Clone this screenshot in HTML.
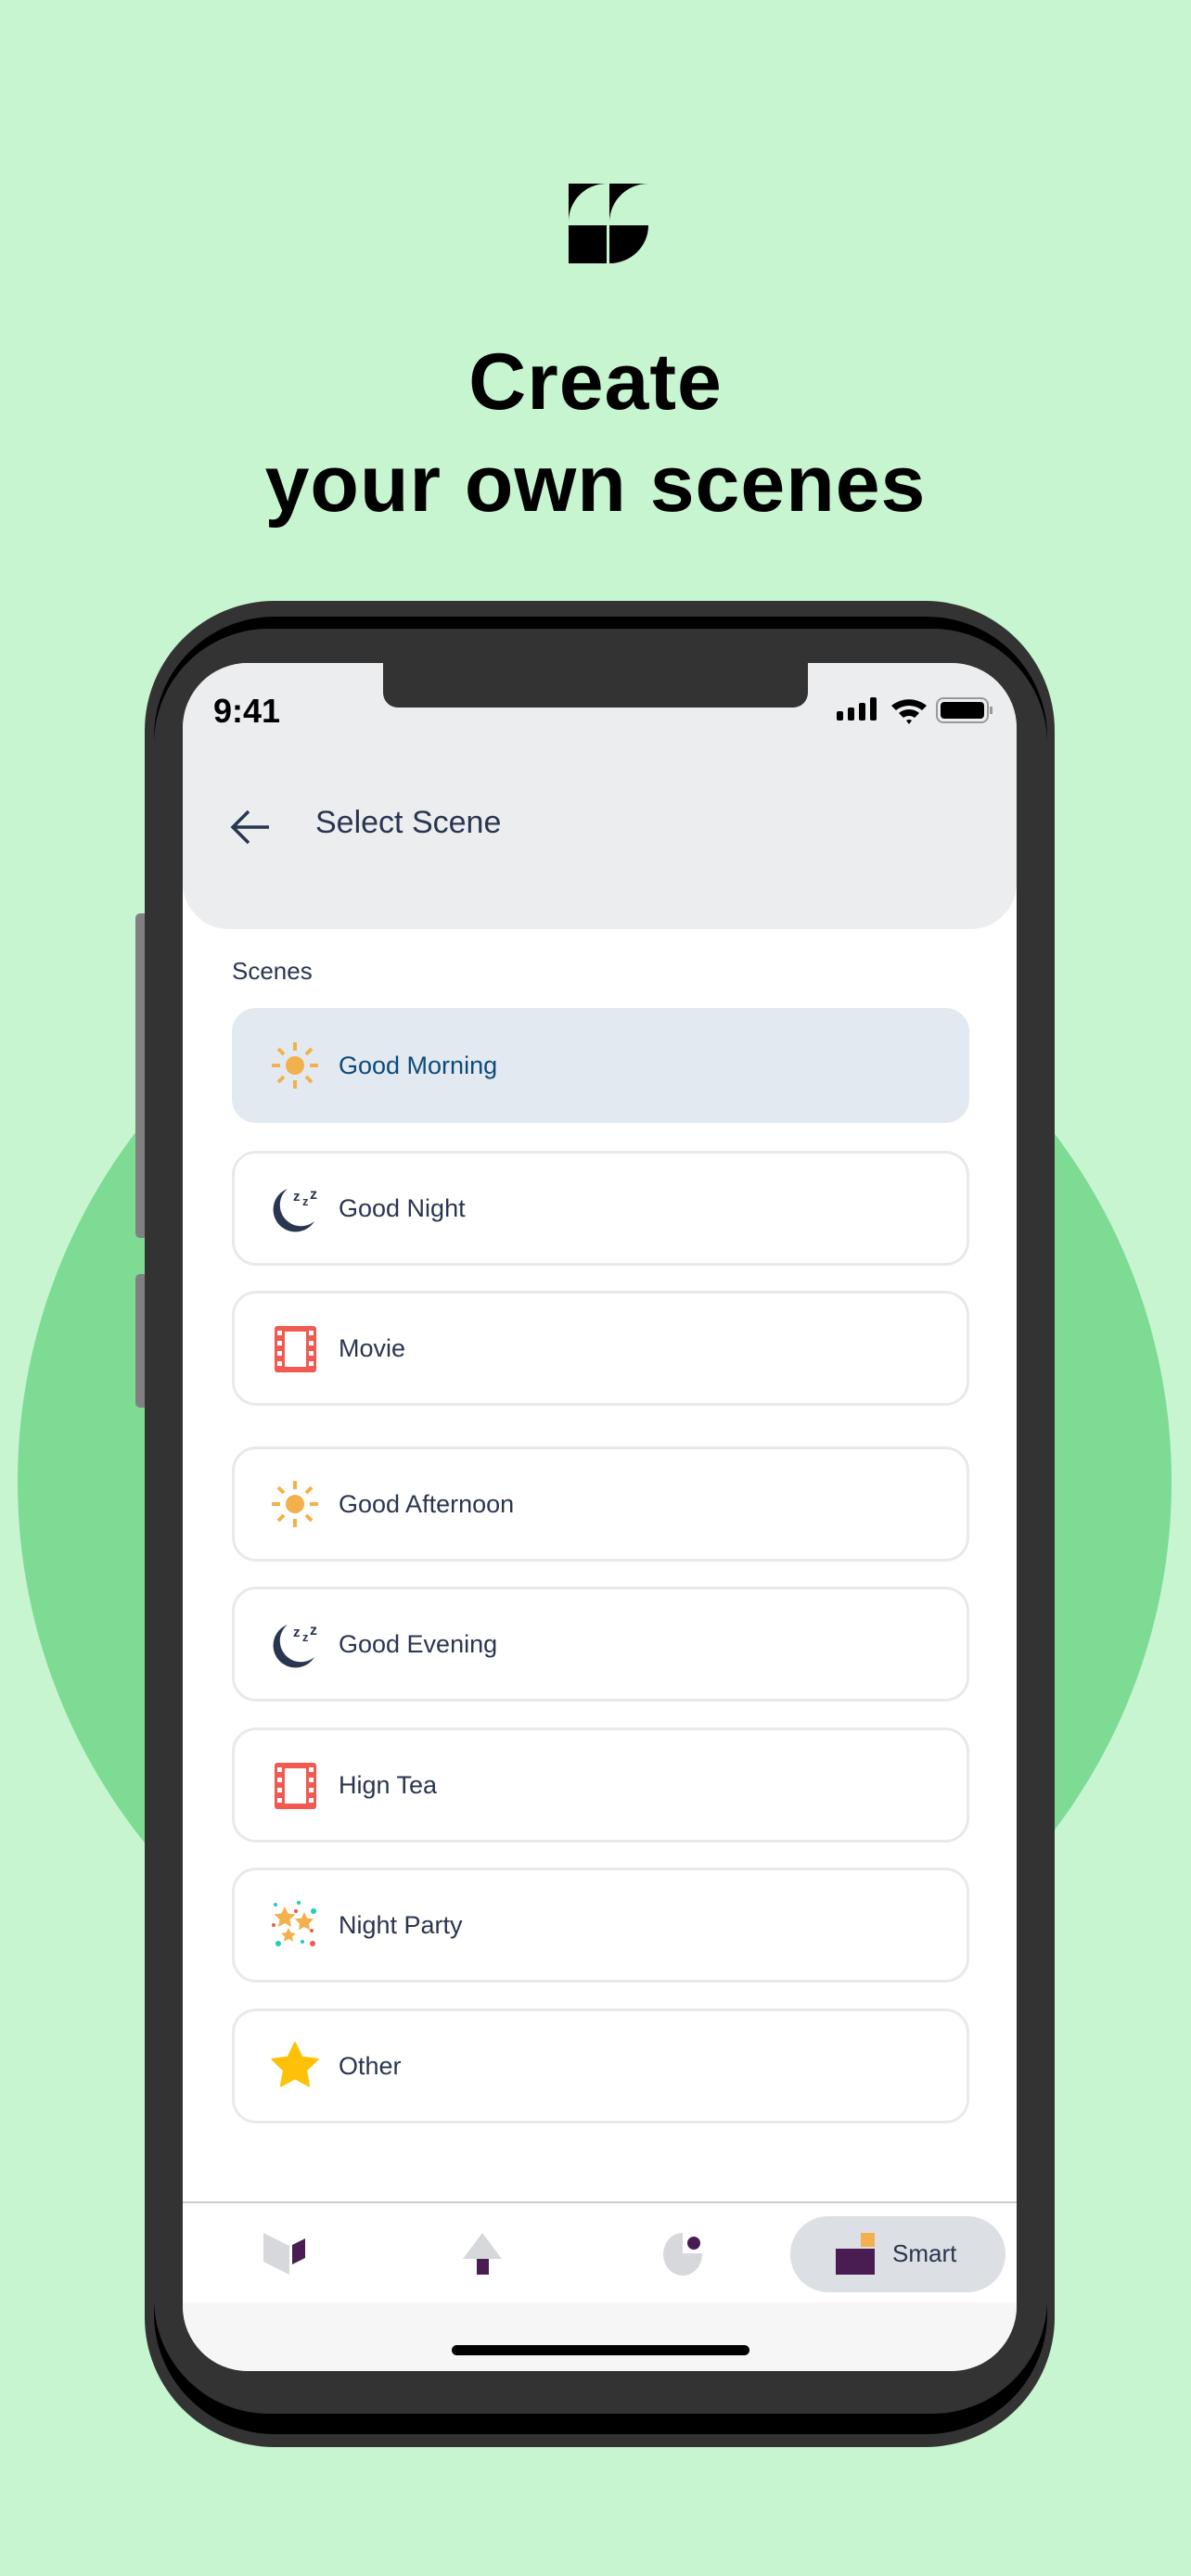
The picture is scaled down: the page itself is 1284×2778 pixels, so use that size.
<!DOCTYPE html>
<html><head><meta charset="utf-8"><style>
*{margin:0;padding:0;box-sizing:border-box}
body{width:1284px;height:2778px;background:#c6f5d0;position:relative;overflow:hidden;font-family:"Liberation Sans",sans-serif}
.a{position:absolute}
.title{left:0;width:1284px;text-align:center;font-weight:bold;font-size:86px;color:#000;letter-spacing:1px}
.card{position:absolute;left:250px;width:795px;height:124px;border:3px solid #e8e9ed;border-radius:26px;background:#fff}
.card .t{position:absolute;left:112px;top:0;line-height:118px;font-size:27px;color:#2a3550}
.card svg{position:absolute;left:38px;top:32px}
</style></head><body>
<div class="a" style="left:19px;top:976px;width:1244px;height:1244px;border-radius:50%;background:#7edb94"></div>
<svg class="a" style="left:613px;top:198px" width="86" height="86" viewBox="0 0 86 86">
<path d="M0 0H41A41 41 0 0 0 0 41Z" fill="#000"/>
<path d="M44 0H86A42 42 0 0 0 44 41Z" fill="#000"/>
<rect x="0" y="45" width="41" height="41" fill="#000"/>
<path d="M44 45H86A42 41 0 0 1 44 86Z" fill="#000"/>
</svg>
<div class="a title" style="top:362px;line-height:100px">Create</div>
<div class="a title" style="top:472px;line-height:100px">your own scenes</div>
<div class="a" style="left:146px;top:985px;width:14px;height:350px;background:#808080;border-radius:5px"></div>
<div class="a" style="left:146px;top:1374px;width:14px;height:144px;background:#808080;border-radius:5px"></div>
<div class="a" style="left:156px;top:648px;width:981px;height:1991px;background:#333;border-radius:140px"></div>
<div class="a" style="left:166px;top:665px;width:963px;height:1960px;background:#000;border-radius:130px"></div>
<div class="a" style="left:166px;top:678px;width:963px;height:1925px;background:#333;border-radius:124px"></div>
<div class="a" style="left:197px;top:715px;width:899px;height:1842px;background:#fff;border-radius:70px;overflow:hidden">
 <div class="a" style="left:0;top:0;width:899px;height:287px;background:#ebedef;border-radius:0 0 50px 50px"></div>
 <div class="a" style="left:216px;top:0;width:458px;height:48px;background:#333;border-radius:0 0 16px 16px"></div>
 <div class="a" style="left:33px;top:31px;font-size:36px;font-weight:bold;color:#000">9:41</div>
 <svg class="a" style="left:705px;top:37px" width="175" height="30">
  <rect x="0" y="15" width="7" height="10" rx="2"/><rect x="12" y="11" width="7" height="14" rx="2"/><rect x="24" y="6" width="7" height="19" rx="2"/><rect x="36" y="0" width="7" height="25" rx="2"/>
  <path d="M59 9A30 30 0 0 1 97 9L92 14A22 22 0 0 0 64 14Z M67 17A17 17 0 0 1 89 17L84 22A10 10 0 0 0 72 22Z M75 25L78 29L81 25A5 5 0 0 0 75 25Z"/>
  <rect x="108" y="1" width="55" height="26" rx="7" fill="none" stroke="#999" stroke-width="2"/><rect x="112" y="5" width="47" height="18" rx="4"/><rect x="165" y="10" width="3" height="8" fill="#999"/>
 </svg>
 <svg class="a" style="left:51px;top:157px" width="44" height="40"><path d="M42 20H4M20 3L3 20L20 37" stroke="#2a3550" stroke-width="3.5" fill="none"/></svg>
 <div class="a" style="left:143px;top:153px;font-size:34px;color:#2a3550">Select Scene</div>
 <div class="a" style="left:53px;top:317px;font-size:26px;color:#2a3550">Scenes</div>
</div>
<div class="card" style="top:1087px;background:#e2e9f0;border-color:#e2e9f0"><svg width="54" height="54" viewBox="0 0 54 54"><circle cx="27" cy="27" r="10" fill="#f2b14c"/><g stroke="#f2b14c" stroke-width="4"><path d="M27 2v9M27 43v9M2 27h9M43 27h9M9 9l6 6M39 39l6 6M45 9l-6 6M15 39l-6 6"/></g></svg><span class="t" style="color:#0d4a7a">Good Morning</span></div>
<div class="card" style="top:1241px"><svg width="54" height="54" viewBox="0 0 54 54"><path d="M19 6A24 24 0 1 0 48 41A21 21 0 0 1 19 6Z" fill="#2a3550"/><text x="25" y="19" font-size="15" font-weight="bold" fill="#2a3550" font-family="Liberation Sans">z</text><text x="35" y="24" font-size="13" font-weight="bold" fill="#2a3550" font-family="Liberation Sans">z</text><text x="43" y="17" font-size="16" font-weight="bold" fill="#2a3550" font-family="Liberation Sans">z</text></svg><span class="t">Good Night</span></div>
<div class="card" style="top:1392px"><svg width="54" height="54" viewBox="0 0 54 54"><rect x="5" y="3" width="45" height="50" rx="3" fill="#f05a50"/><rect x="16" y="9" width="23" height="38" fill="#fff"/><g fill="#fff"><rect x="8" y="8" width="5" height="5"/><rect x="8" y="19" width="5" height="5"/><rect x="8" y="30" width="5" height="5"/><rect x="8" y="41" width="5" height="5"/><rect x="42" y="8" width="5" height="5"/><rect x="42" y="19" width="5" height="5"/><rect x="42" y="30" width="5" height="5"/><rect x="42" y="41" width="5" height="5"/></g></svg><span class="t">Movie</span></div>
<div class="card" style="top:1560px"><svg width="54" height="54" viewBox="0 0 54 54"><circle cx="27" cy="27" r="10" fill="#f2b14c"/><g stroke="#f2b14c" stroke-width="4"><path d="M27 2v9M27 43v9M2 27h9M43 27h9M9 9l6 6M39 39l6 6M45 9l-6 6M15 39l-6 6"/></g></svg><span class="t">Good Afternoon</span></div>
<div class="card" style="top:1711px"><svg width="54" height="54" viewBox="0 0 54 54"><path d="M19 6A24 24 0 1 0 48 41A21 21 0 0 1 19 6Z" fill="#2a3550"/><text x="25" y="19" font-size="15" font-weight="bold" fill="#2a3550" font-family="Liberation Sans">z</text><text x="35" y="24" font-size="13" font-weight="bold" fill="#2a3550" font-family="Liberation Sans">z</text><text x="43" y="17" font-size="16" font-weight="bold" fill="#2a3550" font-family="Liberation Sans">z</text></svg><span class="t">Good Evening</span></div>
<div class="card" style="top:1863px"><svg width="54" height="54" viewBox="0 0 54 54"><rect x="5" y="3" width="45" height="50" rx="3" fill="#f05a50"/><rect x="16" y="9" width="23" height="38" fill="#fff"/><g fill="#fff"><rect x="8" y="8" width="5" height="5"/><rect x="8" y="19" width="5" height="5"/><rect x="8" y="30" width="5" height="5"/><rect x="8" y="41" width="5" height="5"/><rect x="42" y="8" width="5" height="5"/><rect x="42" y="19" width="5" height="5"/><rect x="42" y="30" width="5" height="5"/><rect x="42" y="41" width="5" height="5"/></g></svg><span class="t">Hign Tea</span></div>
<div class="card" style="top:2014px"><svg width="54" height="54" viewBox="0 0 54 54"><g fill="#f2b14c"><path d="M16 7l3.5 7.5 8 1-6 5.5 1.5 8-7-4-7 4 1.5-8-6-5.5 8-1z"/><path d="M37 13l3 6.5 7 1-5 5 1 7-6-3.5-6 3.5 1-7-5-5 7-1z"/><path d="M20 30l2.5 5 5.5 1-4 3.5 1 5.5-5-3-5 3 1-5.5-4-3.5 5.5-1z"/></g><g fill="#1fcfb0"><circle cx="6" cy="5" r="2"/><circle cx="31" cy="3" r="2"/><circle cx="47" cy="12" r="3"/><circle cx="9" cy="47" r="3"/><circle cx="35" cy="45" r="2"/></g><g fill="#f05a50"><circle cx="28" cy="12" r="2"/><circle cx="4" cy="27" r="2"/><circle cx="45" cy="33" r="2"/><circle cx="46" cy="47" r="3"/></g></svg><span class="t">Night Party</span></div>
<div class="card" style="top:2166px"><svg width="54" height="54" viewBox="0 0 54 54"><path d="M27 2l7.5 15.5 17 2.3-12.4 11.9 3 16.8L27 40.4l-15.1 8.1 3-16.8L2.5 19.8l17-2.3z" fill="#ffc107" stroke="#ffc107" stroke-width="2" stroke-linejoin="round"/></svg><span class="t">Other</span></div>
<div class="a" style="left:197px;top:2374px;width:899px;height:2px;background:#ccc"></div>
<div class="a" style="left:197px;top:2483px;width:899px;height:74px;background:#f6f6f6;border-radius:0 0 70px 70px"></div>
<div class="a" style="left:487px;top:2529px;width:321px;height:11px;border-radius:6px;background:#000"></div>
<svg class="a" style="left:284px;top:2408px" width="46" height="46"><path d="M0 0L28 14V45L0 31Z" fill="#d6d8db"/><path d="M31 13L45 6V27L31 34Z" fill="#4a1d52"/></svg>
<svg class="a" style="left:498px;top:2408px" width="44" height="46"><path d="M22 0L43 28H1Z" fill="#d6d8db"/><rect x="16" y="28" width="13" height="17" fill="#4a1d52"/></svg>
<svg class="a" style="left:714px;top:2408px" width="44" height="46"><path d="M22 0V22H43A21 23 0 1 1 22 0Z" fill="#d6d8db"/><ellipse cx="34" cy="11" rx="7" ry="7" fill="#4a1d52"/></svg>
<div class="a" style="left:852px;top:2390px;width:232px;height:82px;border-radius:41px;background:#dcdfe3"></div>
<div class="a" style="left:928px;top:2408px;width:15px;height:15px;background:#f2b14c"></div>
<div class="a" style="left:901px;top:2425px;width:42px;height:28px;background:#4a1d52"></div>
<div class="a" style="left:962px;top:2415px;font-size:26px;color:#2a3550">Smart</div>
</body></html>
